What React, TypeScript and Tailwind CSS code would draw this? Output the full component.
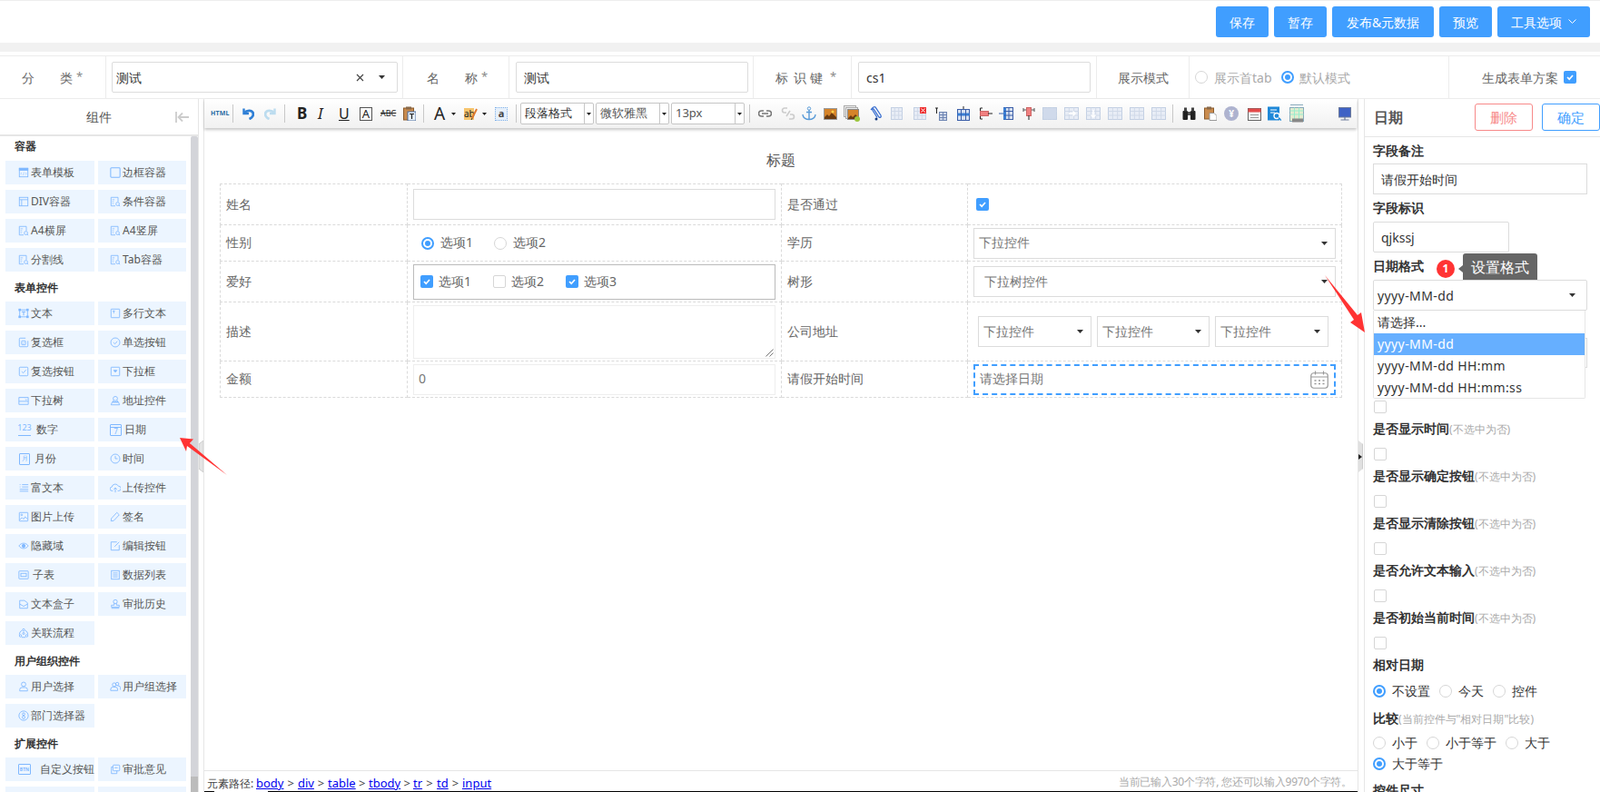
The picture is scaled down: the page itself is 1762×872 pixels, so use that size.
import React from "react";

const BL = "#7fb8ff";

function Sv({ children, w = 14, h = 14, vb, className = "", dw, dh }: { children: React.ReactNode; w?: number; h?: number; vb?: string; className?: string; dw?: number; dh?: number }) {
  return (
    <svg width={dw || w} height={dh || h} viewBox={vb || `0 0 ${w} ${h}`} fill="none" className={"flex-none " + className}>
      {children}
    </svg>
  );
}

const DocI = () => (
  <g stroke={BL}>
    <path d="M10.500 7V1.500h-9v11H7" />
    <path d="M3 4.500h3M3 7h2M3 9.500h2" strokeWidth="0.8" />
    <circle cx="10" cy="10" r="2.200" />
    <path d="M11.500 11.500l1.500 1.500" />
  </g>
);

function SideIcon({ n }: { n: string }) {
  const g = (c: React.ReactNode) => <Sv dw={12} dh={12}>{<g stroke={BL} strokeWidth="1">{c}</g>}</Sv>;
  switch (n) {
    case "form":
      return g(<><rect x="1.500" y="1.500" width="11" height="11" /><rect x="1.500" y="1.500" width="11" height="2.500" fill={BL} /><path d="M4.500 7l-1 1.500 1 1.500M9.500 7l1 1.500-1 1.500M7.500 6.500l-1 4" strokeWidth="0.6" /></>);
    case "border":
      return g(<rect x="1" y="1" width="12" height="12" rx="1" strokeWidth="1.200" />);
    case "div":
      return g(<><rect x="1.500" y="1.500" width="11" height="11" /><path d="M1.500 4.500h11M4.500 4.500v8" /></>);
    case "doc":
      return <Sv dw={12} dh={12}><DocI /></Sv>;
    case "text":
      return g(<><rect x="2" y="2.500" width="10" height="9" /><path d="M4.500 5h5M7 5v4.500" strokeWidth="1.200" /><rect x="1" y="1.500" width="2" height="2" fill={BL} /><rect x="11" y="1.500" width="2" height="2" fill={BL} /><rect x="1" y="10.500" width="2" height="2" fill={BL} /><rect x="11" y="10.500" width="2" height="2" fill={BL} /></>);
    case "multi":
      return g(<><rect x="1.500" y="1.500" width="11" height="11" rx="0.5" /><path d="M3.500 4h3M5 4v3" /></>);
    case "check":
      return g(<><path d="M12.500 5v6.500a1 1 0 0 1-1 1h-9a1 1 0 0 1-1-1v-9a1 1 0 0 1 1-1h7" /><rect x="4.500" y="5" width="5" height="5" rx="0.5" /><path d="M5.500 7.500l1 1 2-2" strokeWidth="0.7" /></>);
    case "radio":
      return g(<><circle cx="7" cy="7" r="5.800" /><path d="M4.500 7l2 2 3-3.500" /></>);
    case "checkb":
      return g(<><rect x="1.500" y="1.500" width="11" height="11" rx="1" /><path d="M4.500 7l2 2 3.500-4" /></>);
    case "select":
      return g(<><rect x="1.500" y="1.500" width="11" height="11" rx="0.5" /><path d="M5 5.500h4L7 8z" fill={BL} /></>);
    case "tree":
      return g(<><path d="M1 3h12v9H1zM1 8h12" /><path d="M9 5l1.500 1.500L12 5" strokeWidth="0.8" /></>);
    case "addr":
      return g(<><circle cx="7" cy="4.500" r="2.800" /><path d="M5 6.500L3.500 9h7L9 6.500M1.500 12.500h11l-1.500-3.500h-8z" /></>);
    case "n123":
      return (
        <span className="flex-none w-[14px] h-[14px] flex flex-col items-center leading-[9px] text-[9px] text-[#7fb8ff] border-b border-[#7fb8ff] [font-family:'Liberation_Sans',sans-serif]">
          123
        </span>
      );
    case "date":
      return (
        <span className="flex-none relative w-[13px] h-[13px] border border-[#7fb8ff] rounded-[1px] flex justify-center items-end">
          <span className="absolute left-0 right-0 top-[2px] border-t border-[#7fb8ff]" />
          <span className="text-[8px] leading-[9px] text-[#7fb8ff] [font-family:'Liberation_Sans',sans-serif]">7</span>
        </span>
      );
    case "month":
      return (
        <span className="flex-none ml-px w-[12px] h-[13px] border border-[#7fb8ff] rounded-[1px] flex justify-center items-center text-[7px] leading-[8px] text-[#7fb8ff]">月</span>
      );
    case "time":
      return g(<><circle cx="7" cy="7" r="5.800" /><path d="M7 3.500V7h3" /></>);
    case "rich":
      return g(<><path d="M2 3h1M2 6h1M5 3h8M5 6h8M2 9h11M2 11.500h11" /></>);
    case "upload":
      return g(<><path d="M4 11H3a2.500 2.500 0 0 1-.5-5A4.500 4.500 0 0 1 11 5a3 3 0 0 1 .5 6H10" /><path d="M7 13V7M5 9l2-2 2 2" /></>);
    case "img":
      return g(<><rect x="1.500" y="1.500" width="11" height="11" rx="0.5" /><circle cx="4.500" cy="4.500" r="1" /><path d="M2 11l3-3 2 2 2-3 3 3" /></>);
    case "sign":
      return g(<path d="M9 1.500l3 3-7 7.500-3.500 .5 .5-3.500z" />);
    case "eye":
      return g(<><path d="M1 7c3-4.500 9-4.500 12 0-3 4.500-9 4.500-12 0z" /><circle cx="7" cy="7" r="2" fill={BL} /></>);
    case "edit":
      return g(<><path d="M9 2H1.500v10.500h10.500V6" /><path d="M6 8l6-6" /></>);
    case "sub":
      return g(<><rect x="1" y="2" width="12" height="10" rx="0.5" /><rect x="3.500" y="5" width="7" height="4" /></>);
    case "list":
      return g(<><rect x="2" y="1.500" width="10" height="11" /><path d="M4 4.500h6M4 7h6M4 9.500h6" /></>);
    case "box":
      return g(<><path d="M2 12.500V2.500h6l4 3v7zM2 7l5 3 5-3" /></>);
    case "stamp":
      return g(<><circle cx="7" cy="4" r="2.500" /><path d="M5.500 6v2.500H2v2.500h10V8.500H8.500V6M2 12.500h10" /></>);
    case "flow":
      return g(<><circle cx="7" cy="3" r="1.500" /><circle cx="3" cy="10.500" r="1.500" /><circle cx="11" cy="10.500" r="1.500" /><path d="M5 3.500A6 6 0 0 0 1.500 9M9 3.500A6 6 0 0 1 12.500 9M4.500 12.500h5" /><circle cx="7" cy="7.500" r="1.200" /></>);
    case "user":
      return g(<><circle cx="7" cy="4" r="2.800" /><path d="M2 12.500V11a3 3 0 0 1 3-3h4a3 3 0 0 1 3 3v1.500z" /></>);
    case "users":
      return g(<><circle cx="5.500" cy="4.500" r="2.300" /><circle cx="9.500" cy="3.500" r="2" /><path d="M1 12v-1.500a3 3 0 0 1 3-3h3a3 3 0 0 1 3 3V12zM10 6h1a2.500 2.500 0 0 1 2.500 2.500V11" /></>);
    case "dept":
      return g(<><circle cx="7" cy="7" r="6" /><circle cx="7" cy="5" r="1.600" /><circle cx="7" cy="9" r="1.800" /></>);
    case "btn":
      return (
        <span className="flex-none w-[14px] h-[12px] border border-[#7fb8ff] rounded-[1px] flex items-center justify-center text-[5px] leading-[6px] font-bold text-[#7fb8ff] [font-family:'Liberation_Sans',sans-serif]">BTN</span>
      );
    case "op":
      return g(<><rect x="4" y="1.500" width="8.500" height="7.500" rx="1" /><path d="M4 4H2v8.500h7V9" /><path d="M6 5h4" /></>);
  }
  return null;
}

type It = { t: string; i: string; c?: string };

const Item = ({ it, right }: { it: It; right?: boolean }) => (
  <div className={"h-[26px] bg-[#ecf5ff] flex items-center text-[12px] text-[#555] whitespace-nowrap " + (right ? "pl-[13px]" : "pl-[14px]")}>
    <span className="w-[14px] h-[14px] flex items-center flex-none"><SideIcon n={it.i} /></span>
    <span className={it.c || ""}>{it.t}</span>
  </div>
);

const Grid = ({ items }: { items: (It | null)[] }) => (
  <div className="grid grid-cols-[98px_97px] gap-x-1 gap-y-1.5 pl-1.5">
    {items.map((it, i) => (it ? <Item key={i} it={it} right={i % 2 === 1} /> : <div key={i} />))}
  </div>
);

const SecLabel = ({ t, first }: { t: string; first?: boolean }) => (
  <div className={"pl-4 text-[12px] font-bold text-[#333] " + (first ? "h-[27px] leading-[22px]" : "h-[33px] leading-[36px]")}>{t}</div>
);

const Caret = ({ className = "" }: { className?: string }) => (
  <svg width="7" height="4" viewBox="0 0 7 4" className={"flex-none " + className}><path d="M0 0h7L3.500 4z" fill="#333" /></svg>
);
const Caret5 = ({ className = "" }: { className?: string }) => (
  <svg width="5" height="3" viewBox="0 0 5 3" className={"flex-none " + className}><path d="M0 0h5L2.500 3z" fill="#222" /></svg>
);

const Radio = ({ on, className = "" }: { on?: boolean; className?: string }) => (
  <span className={"flex-none w-3.5 h-3.5 rounded-full flex items-center justify-center " + (on ? "border-2 border-[#409eff] " : "border border-[#d6d6d6] ") + className}>
    {on && <span className="w-1.5 h-1.5 rounded-full bg-[#409eff]" />}
  </span>
);
const Check = ({ on, className = "" }: { on?: boolean; className?: string }) => (
  <span className={"flex-none w-3.5 h-3.5 rounded-[2px] flex items-center justify-center " + (on ? "bg-[#409eff] " : "border border-[#d6d6d6] ") + className}>
    {on && (
      <svg width="10" height="10" viewBox="0 0 10 10" fill="none"><path d="M2 5l2.200 2.200L8 3" stroke="#fff" strokeWidth="1.700" /></svg>
    )}
  </span>
);

const Sep = ({ c }: { c: string }) => <span className={"flex-none w-px h-[20px] bg-[#c8c8c8] " + c} />;

const TSel = ({ t, c, inner }: { t: string; c: string; inner: string }) => (
  <div className={"flex-none h-6 w-[81px] flex items-center border border-[#c6c6c6] rounded-[2px] bg-white text-[13px] text-[#333] " + c}>
    <span className={"pl-1 whitespace-nowrap " + inner}>{t}</span>
    <span className="w-[10px] h-full border-l border-[#c6c6c6] flex items-center justify-center flex-none"><Caret5 /></span>
  </div>
);

const TableIc = ({ c, children, w = 16 }: { c: string; children?: React.ReactNode; w?: number }) => (
  <Sv w={w} h={16} className={c}>
    <rect x="0.500" y="1.500" width={w - 1} height="13" fill="#e8edf6" stroke="#c3d0e3" />
    <path d={`M0.500 5.500h${w - 1}M0.500 10h${w - 1}M${w / 3} 1.500v13M${(w * 2) / 3} 1.500v13`} stroke="#d0d9e8" />
    {children}
  </Sv>
);

function Toolbar() {
  return (
    <div className="relative h-8 flex items-center bg-linear-to-b from-white to-[#f1f1f1] shadow-[0_2px_3px_rgba(0,0,0,0.22)] w-[1269px]">
      <span className="flex-none ml-[7px] w-[17px] text-[7px] font-bold tracking-[0.2px] text-[#2e6da4] [font-family:'Liberation_Sans',sans-serif]">HTML</span>
      <Sep c="ml-[7px]" />
      <Sv w={13} h={14} className="ml-[10px]"><path d="M1.500 1.500v5.500h5.500" stroke="#2f7fd6" strokeWidth="2.400" /><path d="M2 6.500C5 3 10 3 11.500 6c1 2.500-.5 5.500-4 7" stroke="#2f7fd6" strokeWidth="2.800" /></Sv>
      <Sv w={13} h={14} className="ml-[11px]"><path d="M11.500 1.500v5.500H6" stroke="#bcdcef" strokeWidth="2.400" /><path d="M11 6.500C8 3 3 3 1.500 6c-1 2.500.5 5.500 4 7" stroke="#bcdcef" strokeWidth="2.800" /></Sv>
      <Sep c="ml-[9px]" />
      <span className="flex-none ml-[13px] w-[10px] text-[17px] leading-4 font-bold text-[#222] [font-family:'Liberation_Serif',serif]">B</span>
      <span className="flex-none ml-[13px] w-2 text-[17px] leading-4 italic text-[#222] [font-family:'Liberation_Serif',serif]">I</span>
      <span className="flex-none ml-[15px] w-[11px] text-[16px] leading-4 underline text-[#222] [font-family:'Liberation_Serif',serif]">U</span>
      <span className="flex-none ml-3 w-[14px] h-[15px] border border-[#555] flex items-center justify-center text-[13px] leading-[13px] text-[#222] [font-family:'Liberation_Serif',serif]">A</span>
      <span className="flex-none ml-[9px] w-4 text-[9px] leading-4 line-through text-[#222] [font-family:'Liberation_Serif',serif] whitespace-nowrap">ABC</span>
      <Sv w={14} h={16} className="ml-[9px]"><rect x="0.500" y="2" width="11" height="13" fill="#c98b4e" stroke="#8a5a2b" /><rect x="3" y="0.500" width="6" height="3" fill="#8a6a4a" /><rect x="5" y="6" width="9" height="10" fill="#e6f0fa" stroke="#4a6a9a" /><path d="M7 8.500h5M9.500 8.500v5.500" stroke="#222" strokeWidth="1.200" /></Sv>
      <Sep c="ml-2" />
      <span className="flex-none ml-[11px] w-[13px] text-[19px] leading-4 text-[#222] [font-family:'Liberation_Serif',serif]">A</span>
      <Caret5 className="ml-1.5" />
      <span className="flex-none relative ml-[9px] w-[15px] h-[13px]">
        <span className="block w-[11px] h-[13px] bg-[#f7c56e] text-[10px] leading-[12px] text-[#222] [font-family:'Liberation_Sans',sans-serif]">ab</span>
        <svg width="8" height="13" viewBox="0 0 8 13" className="absolute right-0 top-0"><path d="M7 1L2 11" stroke="#e07b2e" strokeWidth="2" /><path d="M2 11l-1 2" stroke="#333" /></svg>
      </span>
      <Caret5 className="ml-[5px]" />
      <span className="flex-none ml-[9px] w-[14px] h-[15px] border border-dotted border-[#7fb0e8] bg-[#e6f0fb] flex items-center justify-center text-[11px] leading-3 font-bold text-[#444] [font-family:'Liberation_Sans',sans-serif]">a</span>
      <Sep c="ml-[9px]" />
      <TSel t="段落格式" c="ml-1" inner="w-[69px]" />
      <TSel t="微软雅黑" c="ml-0.5" inner="w-[69px] text-[#555]" />
      <TSel t="13px" c="ml-0.5" inner="w-[69px] text-[#555]" />
      <Sep c="ml-[5px]" />
      <Sv w={15} h={14} className="ml-[9px]"><path d="M6 4H3.500a3 3 0 0 0 0 6H6M9 4h2.500a3 3 0 0 1 0 6H9M4 7h7" stroke="#777" strokeWidth="1.600" /></Sv>
      <Sv w={16} h={16} className="ml-[10px]"><path d="M7 2H4a2.500 2.500 0 0 0 0 5h2M9 14h3a2.500 2.500 0 0 0 0-5h-2M10 5l-4 6" stroke="#ccc" strokeWidth="1.600" /></Sv>
      <Sv w={16} h={16} className="ml-[7px]"><circle cx="8" cy="2.500" r="1.700" stroke="#5a9bd8" /><path d="M8 4v11M5 6.500h6M1 9c0 3.500 3.500 5.500 7 5.500s7-2 7-5.500" stroke="#5a9bd8" strokeWidth="1.400" /></Sv>
      <Sv w={15} h={13} className="ml-2"><rect x="0.500" y="0.500" width="14" height="12" fill="#d6842a" stroke="#999" /><path d="M1 10l3-3 2 2 3-4 5 5v2H1z" fill="#6b3b10" /><circle cx="10" cy="4" r="1.500" fill="#ffd24a" /></Sv>
      <Sv w={19} h={19} className="ml-[7px]"><rect x="0.500" y="0.500" width="13" height="12" fill="#eee" stroke="#aaa" /><rect x="2.500" y="2.500" width="13" height="12" fill="#eee" stroke="#aaa" /><rect x="4.500" y="4.500" width="12" height="11" fill="#d6842a" stroke="#888" /><path d="M5 14l3-3 2 2 3-3 3 3v2H5z" fill="#6b3b10" /><circle cx="15" cy="15" r="3" fill="#9bc53d" /></Sv>
      <Sv w={15} h={18} className="ml-[9px]"><path d="M2 5c2-3 4-4 5-3l6 9c1 2-1 3-2 2L5 4c-1-1-2 0-1 1.500l5 8" stroke="#3a6fd0" strokeWidth="1.300" /><circle cx="8" cy="15" r="1.500" fill="#123a80" /></Sv>
      <TableIc c="ml-[9px]" w={13} />
      <TableIc c="ml-3" w={14}><rect x="7" y="1" width="7" height="7" fill="#e33" /><path d="M8.500 2.500l4 4m0-4l-4 4" stroke="#fff" /></TableIc>
      <Sv w={14} h={16} className="ml-[9px]"><path d="M1 2h3M2.500 2v6" stroke="#222" /><rect x="5.500" y="6.500" width="8" height="9" fill="#cdd6e8" stroke="#6f86b3" /><path d="M5.500 9.500h8M5.500 12.500h8M9.500 6.500v9" stroke="#6f86b3" /></Sv>
      <Sv w={14} h={16} className="ml-[11px]"><rect x="0.500" y="3.500" width="13" height="12" fill="#d7e0f0" stroke="#3b5ea8" /><rect x="0.500" y="7.500" width="13" height="3" fill="#3a7fd5" /><path d="M4.500 3.500v12M9.500 3.500v12" stroke="#3b5ea8" /><path d="M7 0v3" stroke="#222" /></Sv>
      <Sv w={15} h={16} className="ml-[10px]"><path d="M4 2H1.500v12H4" stroke="#222" /><rect x="1.500" y="5.500" width="9" height="5" fill="#f08080" stroke="#c66" /><path d="M10 8h5" stroke="#222" /></Sv>
      <Sv w={16} h={16} className="ml-[7px]"><rect x="5.500" y="1.500" width="10" height="13" fill="#d7e0f0" stroke="#3b5ea8" /><rect x="5" y="1.500" width="3" height="13" fill="#3a7fd5" /><path d="M11 1.500v13M5.500 5.500h10M5.500 10h10M0 8h5" stroke="#3b5ea8" /></Sv>
      <Sv w={14} h={16} className="ml-[10px]"><path d="M1 2v4M13 2v4M1 4h12" stroke="#555" /><rect x="4.500" y="1.500" width="5" height="9" fill="#f08080" stroke="#c66" /><path d="M7 10v5" stroke="#222" /></Sv>
      <TableIc c="ml-2"><rect x="1" y="2" width="14" height="12" fill="#d0daeb" /></TableIc>
      <TableIc c="ml-2"><path d="M5 8h7M9.500 5.500L12 8l-2.500 2.500" stroke="#fff" strokeWidth="1.500" /></TableIc>
      <TableIc c="ml-2"><path d="M8 4v8M5.500 9.500L8 12l2.500-2.500" stroke="#fff" strokeWidth="1.500" /></TableIc>
      <TableIc c="ml-2" />
      <TableIc c="ml-2" />
      <TableIc c="ml-2" />
      <Sep c="ml-[7px]" />
      <Sv w={15} h={15} className="ml-2.5"><rect x="0.500" y="4" width="5.500" height="10" rx="1" fill="#222" /><rect x="9" y="4" width="5.500" height="10" rx="1" fill="#222" /><rect x="2" y="0.500" width="3" height="4" fill="#444" /><rect x="10" y="0.500" width="3" height="4" fill="#444" /><rect x="6" y="5" width="3" height="4" fill="#555" /></Sv>
      <Sv w={14} h={16} className="ml-[9px]"><rect x="0.500" y="2" width="10" height="12" fill="#c98b4e" stroke="#8a5a2b" /><rect x="3" y="0.500" width="5" height="3" fill="#8a6a4a" /><path d="M6 7.500h5l3 3v5H6z" fill="#fff" stroke="#999" /></Sv>
      <span className="flex-none ml-2 w-4 h-4 rounded-full bg-[#aeb3cf] flex items-center justify-center text-[10px] leading-4 text-white font-bold [font-family:'Liberation_Sans',sans-serif]">¥</span>
      <Sv w={15} h={15} className="ml-2.5"><rect x="0.500" y="1.500" width="14" height="13" fill="#f4f4f4" stroke="#666" /><rect x="0.500" y="1.500" width="14" height="4" fill="#e34a4a" /><path d="M3 8.500h9M3 11.500h9" stroke="#999" /></Sv>
      <Sv w={15} h={16} className="ml-[7px]"><rect x="0" y="0.500" width="13" height="15" fill="#1e88d8" /><path d="M3 4h7M3 7h5" stroke="#fff" /><circle cx="10" cy="10.500" r="3" stroke="#fff" strokeWidth="1.300" fill="#1e88d8" /><path d="M12 12.500l3 3" stroke="#1e88d8" strokeWidth="1.500" /></Sv>
      <Sv w={16} h={20} className="ml-[9px]"><path d="M1 0.500h14" stroke="#8ab" /><rect x="0.500" y="3.500" width="15" height="15" fill="#e2ecd0" stroke="#8ab" /><path d="M0.500 7h15M0.500 11h15M5.500 3.500v15M10.500 3.500v15" stroke="#9ec" /><rect x="3" y="15.500" width="12" height="4" fill="#888" /></Sv>
      <Sv w={14} h={15} className="ml-[38px]"><rect x="0.500" y="0.500" width="13" height="10.500" fill="#3f62c5" stroke="#6c7a9a" /><path d="M7 11v2.500M2.500 14h9" stroke="#6c7a9a" strokeWidth="1.200" /></Sv>
    </div>
  );
}

const inputCls = "border border-[#dcdcdc] bg-white";

const TSelect = ({ t, c, text = "pl-[5px]", car = "mr-[8px]" }: { t: string; c: string; text?: string; car?: string }) => (
  <div className={"h-[34px] flex items-center justify-between text-[14px] text-[#777] " + inputCls + " " + c}>
    <span className={text + " pb-0.5 whitespace-nowrap"}>{t}</span>
    <Caret className={car} />
  </div>
);

const Td = ({ children, c = "" }: { children?: React.ReactNode; c?: string }) => (
  <td className={"border border-dashed border-[#dadada] text-[14px] text-[#666] align-middle " + c}>{children}</td>
);

const Lb = "pl-1.5 pb-0.5";

function FormTable() {
  return (
    <table className="table-fixed w-[1235px] ml-[17px] mt-[14px]">
      <colgroup>
        <col className="w-[206px]" />
        <col className="w-[412px]" />
        <col className="w-[205px]" />
        <col className="w-[412px]" />
      </colgroup>
      <tbody>
        <tr className="h-[45px]">
          <Td c={Lb}>姓名</Td>
          <Td c="px-1.5"><div className={"h-[34px] " + inputCls} /></Td>
          <Td c={Lb}>是否通过</Td>
          <Td c="pl-[9px]"><Check on /></Td>
        </tr>
        <tr className="h-10">
          <Td c={Lb}>性别</Td>
          <Td c="pl-[15px]">
            <div className="flex items-center">
              <Radio on />
              <span className="ml-[7px] w-[59px] pb-0.5">选项1</span>
              <Radio />
              <span className="ml-[7px] pb-0.5">选项2</span>
            </div>
          </Td>
          <Td c={Lb}>学历</Td>
          <Td c="px-1.5"><TSelect t="下拉控件" c="" /></Td>
        </tr>
        <tr className="h-[45px]">
          <Td c={Lb}>爱好</Td>
          <Td c="px-1.5">
            <div className="h-[39px] border border-[#bbb] flex items-center pl-[7px]">
              <Check on />
              <span className="ml-1.5 w-[60px] pb-0.5">选项1</span>
              <Check />
              <span className="ml-1.5 w-[60px] pb-0.5">选项2</span>
              <Check on />
              <span className="ml-1.5 pb-0.5">选项3</span>
            </div>
          </Td>
          <Td c={Lb}>树形</Td>
          <Td c="px-1.5"><TSelect t="下拉树控件" c="" text="pl-[11px]" /></Td>
        </tr>
        <tr className="h-[65px]">
          <Td c={Lb}>描述</Td>
          <Td c="px-1.5">
            <div className="h-[59px] border border-[#eee] flex items-end justify-end pr-px pb-px">
              <svg width="9" height="9" viewBox="0 0 9 9"><path d="M0.500 8.500l8-8M4.500 8.500l4-4" stroke="#777" /></svg>
            </div>
          </Td>
          <Td c={Lb}>公司地址</Td>
          <Td c="pl-[11px]">
            <div className="flex gap-1.5">
              <TSelect t="下拉控件" c="w-[125px]" />
              <TSelect t="下拉控件" c="w-[124px]" />
              <TSelect t="下拉控件" c="w-[125px]" />
            </div>
          </Td>
        </tr>
        <tr className="h-10">
          <Td c={Lb}>金额</Td>
          <Td c="px-1.5"><div className="h-[34px] border border-[#eee] flex items-center pl-[5px] pb-0.5 text-[#777]">0</div></Td>
          <Td c={Lb}>请假开始时间</Td>
          <Td c="px-1.5">
            <div className="h-[34px] border-2 border-dashed border-[#409eff] flex items-center justify-between pl-[5px] pr-[6px] text-[#777]">
              <span className="pb-0.5">请选择日期</span>
              <svg width="20" height="20" viewBox="0 0 20 20" fill="none" className="flex-none">
                <rect x="0.750" y="2.750" width="18.500" height="16.500" rx="3" stroke="#999" strokeWidth="1.200" />
                <path d="M1 7h18M5.500 0.500v4M14.500 0.500v4" stroke="#999" strokeWidth="1.200" />
                <path d="M4.500 11h2M9 11h2M13.500 11h2M4.500 14.500h2M9 14.500h2M13.500 14.500h2" stroke="#999" strokeWidth="1.500" />
              </svg>
            </div>
          </Td>
        </tr>
      </tbody>
    </table>
  );
}

const CkLabel = ({ t, note = "(不选中为否)" }: { t: string; note?: string }) => (
  <div className="mt-[7px] h-5 leading-5 text-[14px] font-bold text-[#333] whitespace-nowrap">
    {t}
    <span className="text-[12px] font-normal text-[#aaa]">{note}</span>
  </div>
);

const RItem = ({ t, on }: { t: string; on?: boolean }) => (
  <span className="flex items-center mr-2.5">
    <Radio on={on} />
    <span className="ml-[7px] pb-0.5">{t}</span>
  </span>
);

function RightPanel() {
  return (
    <div className="flex-1 border-l border-[#e6e6e6] overflow-hidden text-[14px] text-[#333] h-full">
      <div className="h-[42px] border-b border-[#e6e6e6] flex items-start pt-[5px] pl-[10px]">
        <span className="text-[16px] leading-[30px] font-bold text-[#555] w-[111px]">日期</span>
        <span className="w-16 h-[30px] border border-[#f78989] rounded-[3px] flex items-center justify-center text-[15px] text-[#f78989]">删除</span>
        <span className="ml-2.5 w-16 h-[30px] border border-[#409eff] rounded-[3px] flex items-center justify-center text-[15px] text-[#409eff]">确定</span>
      </div>
      <div className="pl-[9px]">
        <div className="mt-[5px] h-5 leading-5 font-bold">字段备注</div>
        <div className={"mt-1 h-[34px] w-[236px] flex items-center pl-2 " + inputCls}>请假开始时间</div>
        <div className="mt-[5px] h-5 leading-5 font-bold">字段标识</div>
        <div className={"mt-[5px] h-[34px] w-[150px] flex items-center pl-2 rounded-[2px] " + inputCls}>qjkssj</div>
        <div className="relative mt-[5px] h-5 leading-5 font-bold">
          日期格式
          <span className="absolute left-[70px] top-[3px] w-5 h-5 rounded-full bg-[#f33] text-white text-[12px] flex items-center justify-center font-bold">1</span>
          <span className="absolute left-[99px] top-[-4px] h-[34px] w-[82px] pb-1 bg-[#666] rounded-[3px] text-white text-[16px] font-normal flex items-center justify-center">设置格式</span>
          <span className="absolute left-[94px] top-[9px] border-y-[4px] border-r-[5px] border-y-transparent border-r-[#666]" />
        </div>
        <div className="relative mt-[5px] w-[236px]">
          <div className={"h-[34px] flex items-center justify-between pl-1 pr-3 rounded-[2px] tracking-[0.4px] " + inputCls}>
            <span>yyyy-MM-dd</span>
            <Caret />
          </div>
          <div className="absolute z-10 left-0 top-[34px] w-[234px] h-[97px] bg-white border border-[#e6e6e6] border-t-0 rounded-b-[2px] overflow-hidden tracking-[0.4px]">
            <div className="h-[25px] leading-[25px] pl-1 tracking-normal">请选择...</div>
            <div className="h-6 leading-6 pl-1 bg-[#66afff] text-white">yyyy-MM-dd</div>
            <div className="h-6 leading-6 pl-1">yyyy-MM-dd HH:mm</div>
            <div className="h-6 leading-6 pl-1">yyyy-MM-dd HH:mm:ss</div>
          </div>
        </div>
        <div className={"mt-[30px] h-[33px] w-[236px] " + inputCls} />
        <Check className="mt-9 ml-px" />
        <CkLabel t="是否显示时间" />
        <Check className="mt-[11px] ml-px" />
        <CkLabel t="是否显示确定按钮" />
        <Check className="mt-[11px] ml-px" />
        <CkLabel t="是否显示清除按钮" />
        <Check className="mt-[11px] ml-px" />
        <CkLabel t="是否允许文本输入" />
        <Check className="mt-[11px] ml-px" />
        <CkLabel t="是否初始当前时间" />
        <Check className="mt-[11px] ml-px" />
        <CkLabel t="相对日期" note="" />
        <div className="mt-[9px] h-5 flex items-center">
          <RItem t="不设置" on />
          <RItem t="今天" />
          <RItem t="控件" />
        </div>
        <div className="mt-2.5 h-5 leading-5 font-bold whitespace-nowrap">
          比较<span className="text-[12px] font-normal text-[#aaa]">(当前控件与"相对日期"比较)</span>
        </div>
        <div className="mt-[7px] h-5 flex items-center">
          <RItem t="小于" />
          <RItem t="小于等于" />
          <RItem t="大于" />
        </div>
        <div className="mt-[3px] h-5 flex items-center">
          <RItem t="大于等于" on />
        </div>
        <div className="mt-[9px] h-5 leading-5 font-bold">控件尺寸</div>
      </div>
    </div>
  );
}

const PathSeg = ({ t, c, last }: { t: string; c: string; last?: boolean }) => (
  <span className={"inline-flex " + c}>
    <a className="text-[#0000ee] underline flex-none">{t}</a>
    {!last && <span className="flex-1 text-center">&gt;</span>}
  </span>
);

const FLabel = ({ c, children }: { c: string; children: React.ReactNode }) => (
  <div className={"flex-none h-full flex items-center border-r border-[#ececec] text-[14px] text-[#666] " + c}>{children}</div>
);

const Star = () => <span className="text-[13px] text-[#888] ml-1">*</span>;

export default function App() {
  const containers: It[] = [
    { t: "表单模板", i: "form" }, { t: "边框容器", i: "border" },
    { t: "DIV容器", i: "div" }, { t: "条件容器", i: "doc" },
    { t: "A4横屏", i: "doc" }, { t: "A4竖屏", i: "doc" },
    { t: "分割线", i: "doc" }, { t: "Tab容器", i: "doc" },
  ];
  const controls: (It | null)[] = [
    { t: "文本", i: "text" }, { t: "多行文本", i: "multi" },
    { t: "复选框", i: "check" }, { t: "单选按钮", i: "radio" },
    { t: "复选按钮", i: "checkb" }, { t: "下拉框", i: "select" },
    { t: "下拉树", i: "tree" }, { t: "地址控件", i: "addr" },
    { t: "数字", i: "n123", c: "ml-[6px]" }, { t: "日期", i: "date", c: "ml-[2px]" },
    { t: "月份", i: "month", c: "ml-[4px]" }, { t: "时间", i: "time" },
    { t: "富文本", i: "rich" }, { t: "上传控件", i: "upload" },
    { t: "图片上传", i: "img" }, { t: "签名", i: "sign" },
    { t: "隐藏域", i: "eye" }, { t: "编辑按钮", i: "edit" },
    { t: "子表", i: "sub", c: "ml-[2px]" }, { t: "数据列表", i: "list" },
    { t: "文本盒子", i: "box" }, { t: "审批历史", i: "stamp" },
    { t: "关联流程", i: "flow" }, null,
  ];
  const users: (It | null)[] = [
    { t: "用户选择", i: "user" }, { t: "用户组选择", i: "users" },
    { t: "部门选择器", i: "dept" }, null,
  ];
  const ext: (It | null)[] = [
    { t: "自定义按钮", i: "btn", c: "ml-[10px]" }, { t: "审批意见", i: "op" },
    { t: "", i: "" }, { t: "", i: "" },
  ];

  return (
    <div className="relative w-[1762px] h-[872px] overflow-hidden bg-white flex flex-col [font-family:'Noto_Sans','Noto_Sans_CJK_SC',sans-serif]">
      {/* top bar */}
      <div className="h-[47px] flex-none border-t border-[#eee] flex items-center justify-end gap-1.5 pr-[11px] text-[14px] text-white">
        <span className="w-[58px] h-[34px] bg-[#409eff] rounded-[3px] flex items-center justify-center">保存</span>
        <span className="w-[58px] h-[34px] bg-[#409eff] rounded-[3px] flex items-center justify-center">暂存</span>
        <span className="w-[112px] h-[34px] bg-[#409eff] rounded-[3px] flex items-center justify-center">发布&amp;元数据</span>
        <span className="w-[58px] h-[34px] bg-[#409eff] rounded-[3px] flex items-center justify-center">预览</span>
        <span className="w-[102px] h-[34px] bg-[#409eff] rounded-[3px] flex items-center justify-center">
          工具选项
          <svg width="9" height="6" viewBox="0 0 9 6" fill="none" className="ml-[7px]"><path d="M0.500 0.500l4 4 4-4" stroke="#fff" /></svg>
        </span>
      </div>
      <div className="h-2.5 flex-none bg-[#f1f1f1]" />
      {/* form row */}
      <div className="mt-1 h-12 flex-none border-y border-[#ececec] flex items-center">
        <FLabel c="w-[117px] pl-6"><span className="w-[42px]">分</span><span>类</span><Star /></FLabel>
        <div className="flex-none w-[327px] h-full pl-1.5 border-r border-[#ececec] flex items-center">
          <div className={"w-[315px] h-[34px] rounded-[2px] flex items-center pl-1 text-[14px] text-[#333] " + inputCls}>
            <span className="w-[264px]">测试</span>
            <svg width="9" height="9" viewBox="0 0 9 9" className="flex-none"><path d="M1 1l7 7m0-7L1 8" stroke="#444" strokeWidth="1.200" /></svg>
            <Caret className="ml-4" />
          </div>
        </div>
        <FLabel c="w-[117px] pl-[26px]"><span className="w-[42px]">名</span><span>称</span><Star /></FLabel>
        <div className="flex-none w-[269px] h-full pl-[7px] border-r border-[#ececec] flex items-center">
          <div className={"w-[256px] h-[34px] rounded-[2px] flex items-center pl-2 text-[14px] text-[#333] " + inputCls}>测试</div>
        </div>
        <FLabel c="w-[108px] pl-6">
          <span className="w-5">标</span><span className="w-[18px]">识</span><span className="w-[18px]">键</span><Star />
        </FLabel>
        <div className="flex-none w-[270px] h-full pl-[7px] border-r border-[#ececec] flex items-center">
          <div className={"w-[256px] h-[34px] rounded-[2px] flex items-center pl-2 text-[14px] text-[#333] " + inputCls}>cs1</div>
        </div>
        <FLabel c="w-[102px] pl-[23px]">展示模式</FLabel>
        <div className="flex-none w-[286px] h-full pl-1.5 border-r border-[#ececec] flex items-center text-[14px] text-[#aaa]">
          <Radio />
          <span className="ml-[7px] w-[74px]">展示首tab</span>
          <Radio on />
          <span className="ml-1.5">默认模式</span>
        </div>
        <div className="flex-1 h-full pl-9 flex items-center text-[14px] text-[#666]">
          生成表单方案
          <Check on className="ml-1.5" />
        </div>
      </div>
      {/* body */}
      <div className="flex-1 flex min-h-0">
        {/* left panel */}
        <div className="flex-none w-[219px] h-full border-r border-[#e6e6e6] flex flex-col">
          <div className="h-[41px] flex-none border-b-2 border-[#e6e6e6] relative flex items-center text-[14px] text-[#555]">
            <span className="ml-[95px]">组件</span>
            <svg width="16" height="12" viewBox="0 0 16 12" fill="none" className="ml-[70px] flex-none"><path d="M1 0v12M15 6H4M8 1.500L3.500 6 8 10.500" stroke="#ccc" strokeWidth="1.800" /></svg>
          </div>
          <div className="flex-1 flex min-h-0">
            <div className="w-[210px] flex-none overflow-hidden">
              <SecLabel t="容器" first />
              <Grid items={containers} />
              <SecLabel t="表单控件" />
              <Grid items={controls} />
              <SecLabel t="用户组织控件" />
              <Grid items={users} />
              <SecLabel t="扩展控件" />
              <Grid items={ext} />
            </div>
            <div className="w-2 flex-none flex flex-col">
              <div className="h-[705px] bg-[#d3d4d9] rounded-t-[2px]" />
              <div className="flex-1 bg-[#bcbcbc]" />
            </div>
          </div>
        </div>
        {/* left handle */}
        <div className="flex-none w-[5px] h-full">
          <svg width="5" height="35" viewBox="0 0 5 35" className="mt-[376px]"><path d="M5 0L0 4v27l5 4z" fill="#e4e4e4" stroke="#ccc" /></svg>
        </div>
        {/* editor */}
        <div className="flex-none w-[1272px] h-full border-x border-[#e6e6e6] flex flex-col">
          <Toolbar />
          <div className="flex-1 min-h-0">
            <div className="mt-[23px] h-6 leading-6 text-center text-[16px] text-[#555]">标题</div>
            <FormTable />
          </div>
          <div className="h-[23px] flex-none border-t border-[#e6e6e6] flex items-center justify-between pl-[3px] pr-[6px] text-[#444] whitespace-nowrap">
            <span className="flex items-center pt-1.5 [font-family:'Liberation_Sans','Noto_Sans_CJK_SC',sans-serif] text-[13px]">
              <span className="w-[54px] flex-none text-[12px]">元素路径:</span>
              <PathSeg t="body" c="w-[46px]" />
              <PathSeg t="div" c="w-[33px]" />
              <PathSeg t="table" c="w-[45px]" />
              <PathSeg t="tbody" c="w-[49px]" />
              <PathSeg t="tr" c="w-[26px]" />
              <PathSeg t="td" c="w-[28px]" />
              <PathSeg t="input" c="w-[30px]" last />
            </span>
            <span className="pt-0.5 text-[12px] text-[#aaa] tracking-[-0.25px]">当前已输入30个字符, 您还可以输入9970个字符。</span>
          </div>
          <div className="h-px flex-none flex">
            <span className="w-[11px] bg-black" />
            <span className="w-[59px]" />
            <span className="flex-1 bg-black" />
          </div>
        </div>
        {/* right handle */}
        <div className="flex-none w-[6px] h-full">
          <div className="mt-[376px] w-[5px] h-[35px] bg-[#e0e0e0] border-r border-[#ccc] flex items-center [clip-path:polygon(0_0,100%_4px,100%_31px,0_100%)]">
            <span className="border-y-[3px] border-l-[4px] border-y-transparent border-l-[#222]" />
          </div>
        </div>
        <RightPanel />
      </div>
      {/* annotation arrows */}
      <svg className="absolute inset-0 pointer-events-none" width="1762" height="872" viewBox="0 0 1762 872">
        <polygon points="198,482 213,483.500 209,488 250,523 206,491 205,497" fill="#f33" />
        <polygon points="1459,303 1495,347 1499,344 1503,366 1487,355 1491,352" fill="#f33" />
      </svg>
    </div>
  );
}
